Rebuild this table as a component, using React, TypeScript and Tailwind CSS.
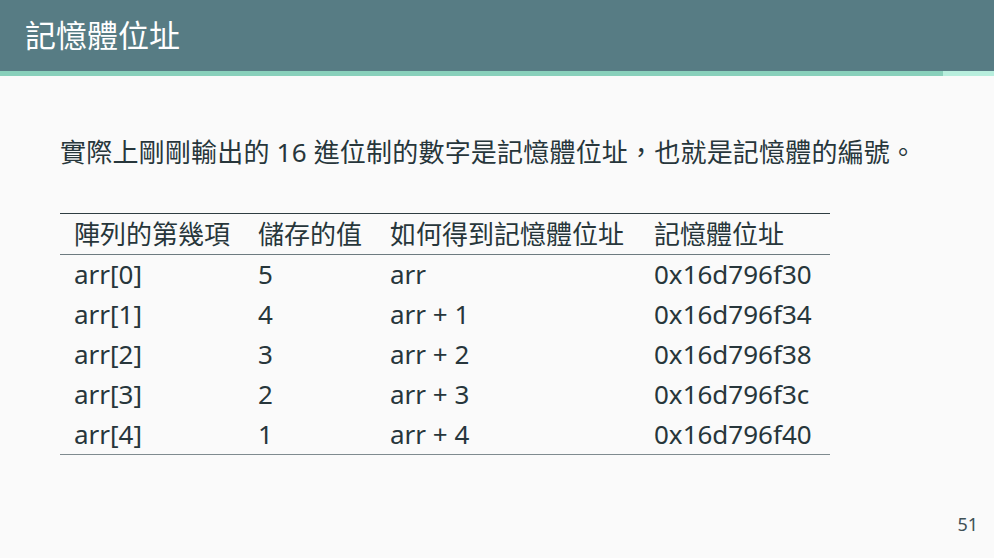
const rows = [
  { item: "arr[0]", value: "5", how: "arr", addr: "0x16d796f30" },
  { item: "arr[1]", value: "4", how: "arr + 1", addr: "0x16d796f34" },
  { item: "arr[2]", value: "3", how: "arr + 2", addr: "0x16d796f38" },
  { item: "arr[3]", value: "2", how: "arr + 3", addr: "0x16d796f3c" },
  { item: "arr[4]", value: "1", how: "arr + 4", addr: "0x16d796f40" },
];

const font = { fontFamily: '"Noto Sans", "Noto Sans CJK TC", sans-serif' };

export default function App() {
  return (
    <div className="w-[994px] h-[558px] bg-[#fafafa] flex flex-col text-[#27363b]" style={font}>
      {/* Header */}
      <div className="h-[71px] bg-[#577c84] flex items-center pl-[25px]">
        <h1 className="text-[31px] text-white leading-none">記憶體位址</h1>
      </div>
      <div className="flex h-[5px]">
        <div className="w-[943px] bg-[#88d0bb]" />
        <div className="flex-1 bg-[#b8eedd]" />
      </div>

      {/* Body */}
      <div className="flex-1 flex flex-col pl-[60px] relative">
        <p className="mt-[58px] text-[26px] leading-[36px] tracking-[0.2px]">
          實際上剛剛輸出的 16 進位制的數字是記憶體位址，也就是記憶體的編號。
        </p>

        <table className="mt-[43px] w-[770px] text-[26px] border-collapse">
          <thead>
            <tr className="border-t-[1.5px] border-[#2f3d42] border-b border-b-[#6d7b80] h-[41px] text-left">
              <th className="font-normal pl-[14px] w-[184px]">陣列的第幾項</th>
              <th className="font-normal pl-[14px] w-[132px]">儲存的值</th>
              <th className="font-normal pl-[14px] w-[264px]">如何得到記憶體位址</th>
              <th className="font-normal pl-[14px]">記憶體位址</th>
            </tr>
          </thead>
          <tbody className="border-b-[1.5px] border-[#7f8b8f]">
            {rows.map((r) => (
              <tr key={r.item} className="h-[40px]">
                <td className="pl-[14px]">{r.item}</td>
                <td className="pl-[14px]">{r.value}</td>
                <td className="pl-[14px]">{r.how}</td>
                <td className="pl-[14px]">{r.addr}</td>
              </tr>
            ))}
          </tbody>
        </table>

        <div className="absolute right-[16px] bottom-[20px] text-[18px] text-[#3f5156]">51</div>
      </div>
    </div>
  );
}
